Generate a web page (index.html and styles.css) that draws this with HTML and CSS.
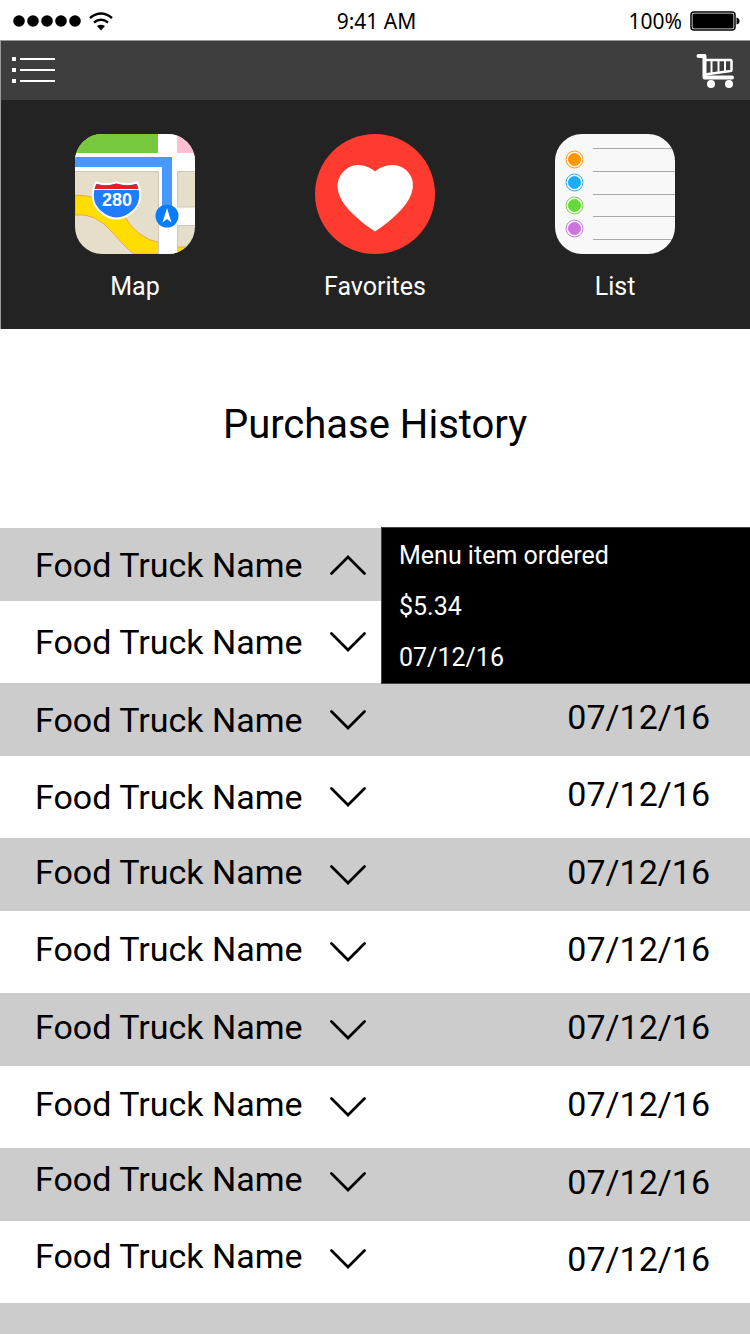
FILE: index.html
```html
<!DOCTYPE html>
<html lang="en">
<head>
<meta charset="utf-8">
<meta name="viewport" content="width=device-width, initial-scale=1">
<title>Purchase History</title>
<link rel="stylesheet" href="styles.css">
</head>
<body>
<svg width="0" height="0" class="sprite" aria-hidden="true">
  <symbol id="chevron" viewBox="0 0 36 20"><path d="M1.5 1.5 18 18 34.500 1.500" fill="none" stroke="#000" stroke-width="2.700" stroke-linecap="round"/></symbol>
</svg>
<div class="status">
  <div class="status-left">
    <svg width="68" height="12" viewBox="0 0 68 12" aria-label="Signal"><circle cx="6" cy="6" r="5.800"/><circle cx="20" cy="6" r="5.800"/><circle cx="34" cy="6" r="5.800"/><circle cx="48" cy="6" r="5.800"/><circle cx="62" cy="6" r="5.800"/></svg>
    <svg width="24" height="19" viewBox="0 0 24 19" aria-label="Wi-Fi"><path d="M1 6Q12-3 23 6M5 10.500Q12 5 19 10.500" fill="none" stroke="#000" stroke-width="2.500"/><path d="M8 14Q12 11.500 16 14L12 18.500Z"/></svg>
  </div>
  <div class="status-time">9:41 AM</div>
  <div class="status-right">
    <span>100%</span>
    <svg width="50" height="20" viewBox="0 0 50 20" aria-label="Battery"><rect x="1" y="1" width="44" height="18" rx="3" fill="#fff" stroke="#000" stroke-width="1.500"/><rect x="2.500" y="2.500" width="41" height="15" rx="1.500"/><path d="M46.500 6.500Q49.500 7 49.500 10T46.500 13.500Z"/></svg>
  </div>
</div>
<header class="navbar">
  <button class="icon-button" aria-label="Menu">
    <svg width="44" height="28" viewBox="0 0 44 28"><path d="M0 0h4v4H0zM0 11h4v4H0zM0 22h4v4H0zM8 1h35v2H8zM8 12h35v2H8zM8 23h35v2H8z" fill="#fff"/></svg>
  </button>
  <button class="icon-button" aria-label="Cart">
    <svg width="40" height="36" viewBox="0 0 40 36"><g fill="none" stroke="#fff"><path d="M2.500 3H8.500v21.500H36" stroke-width="4" stroke-linecap="round" stroke-linejoin="round"/><path d="M9 7h25.500q1 0 1 1v9q0 1-1 1L9 21.500" stroke-width="2.500" stroke-linejoin="round"/><path d="M15.500 7v13M22.500 7v12M29 7v11" stroke-width="2"/></g><circle cx="15" cy="31" r="4" fill="#fff"/><circle cx="33" cy="31" r="4" fill="#fff"/></svg>
  </button>
</header>
<nav class="shortcuts">
  <a class="shortcut" href="#map">
    <svg width="120" height="120" viewBox="0 0 120 120" aria-hidden="true">
      <defs><clipPath id="tile"><rect width="120" height="120" rx="27"/></clipPath></defs>
      <g clip-path="url(#tile)">
        <path d="M0 0h120v120H0z" fill="#e4decb"/>
        <path d="M0 61Q26 61 47 78Q61 105 86 109V120H59Q52 115 38 99Q20 78 0 81ZM98 113h22v7H98z" fill="#fd0" stroke="#f5a53d"/>
        <path d="M0 19h120v18H0zM83 0h19v120H83zM98 73h22v18H98z" fill="#fff"/>
        <path d="M0 37.500h83.500V120M102.500 120V91.500H120M120 73H102.500V37.500H120" fill="none" stroke="#cfc7b8"/>
        <path d="M0 0h83v19H0z" fill="#76c83c"/>
        <path d="M102 0h18v19h-18z" fill="#fbc1d0"/>
        <path d="M0 23h97v50H87V33H0z" fill="#4899ff"/>
        <path d="M21 48.500Q30 52 41.500 48.500Q53 52 62 48.500Q66 56 65 64C64 75 52 84.500 41.500 84.500C31 84.500 19 75 18 64Q17 56 21 48.500Z" fill="#1f7bff" stroke="#fff" stroke-width="2"/>
        <path d="M21.500 50Q31 53 41.500 49.500Q52 53 61.500 50L63.500 55H19.500Z" fill="#e11f29"/>
        <path d="M19 55.500h45" stroke="#fff"/>
        <text x="42" y="72" class="shield-text">280</text>
        <circle cx="92" cy="82" r="11.500" fill="#077cff"/>
        <path d="M92 74 96.500 88.500 92 85 87.500 88.500Z" fill="#fff"/>
      </g>
    </svg>
    <span>Map</span>
  </a>
  <a class="shortcut" href="#favorites">
    <svg width="120" height="120" viewBox="0 0 120 120" aria-hidden="true"><circle cx="60" cy="60" r="60" fill="#ff3b30"/><path d="M60 97.500Q47 89 38 80C18 61 20 45 30 36C40 27 54 32 60 37.500C66 32 81 27 91 36C101 45 102 61 82 80Q73 89 60 97.500Z" fill="#fff"/></svg>
    <span>Favorites</span>
  </a>
  <a class="shortcut" href="#list">
    <svg width="120" height="120" viewBox="0 0 120 120" aria-hidden="true">
      <g clip-path="url(#tile)"><path d="M0 0h120v120H0z" fill="#f8f8f8"/><path d="M38 14.500h82M38 37.500h82M38 60.500h82M38 82.500h82M38 105.500h82" stroke="#aaa"/></g>
      <g fill="#ff9500" stroke="#ff9500"><circle cx="19.500" cy="25.500" r="6"/><circle cx="19.500" cy="25.500" r="8.500" fill="none"/></g>
      <g fill="#1badf8" stroke="#1badf8"><circle cx="19.500" cy="48.500" r="6"/><circle cx="19.500" cy="48.500" r="8.500" fill="none"/></g>
      <g fill="#63da38" stroke="#63da38"><circle cx="19.500" cy="71.500" r="6"/><circle cx="19.500" cy="71.500" r="8.500" fill="none"/></g>
      <g fill="#cc73e1" stroke="#cc73e1"><circle cx="19.500" cy="94.500" r="6"/><circle cx="19.500" cy="94.500" r="8.500" fill="none"/></g>
    </svg>
    <span>List</span>
  </a>
</nav>
<main class="content">
  <h1 class="title">Purchase History</h1>
  <ul class="history">
    <li class="row">
      <button class="truck" aria-expanded="true" aria-controls="order"><span class="name">Food Truck Name</span><svg class="chevron" aria-hidden="true"><use href="#chevron"/></svg></button>
      <div class="order" id="order">
        <p>Menu item ordered</p>
        <p>$5.34</p>
        <p>07/12/16</p>
      </div>
    </li>
    <li class="row"><button class="truck" aria-expanded="false"><span class="name">Food Truck Name</span><svg class="chevron" aria-hidden="true"><use href="#chevron"/></svg></button></li>
    <li class="row"><button class="truck" aria-expanded="false"><span class="name">Food Truck Name</span><svg class="chevron" aria-hidden="true"><use href="#chevron"/></svg></button><time class="date">07/12/16</time></li>
    <li class="row"><button class="truck" aria-expanded="false"><span class="name">Food Truck Name</span><svg class="chevron" aria-hidden="true"><use href="#chevron"/></svg></button><time class="date">07/12/16</time></li>
    <li class="row"><button class="truck" aria-expanded="false"><span class="name">Food Truck Name</span><svg class="chevron" aria-hidden="true"><use href="#chevron"/></svg></button><time class="date">07/12/16</time></li>
    <li class="row"><button class="truck" aria-expanded="false"><span class="name">Food Truck Name</span><svg class="chevron" aria-hidden="true"><use href="#chevron"/></svg></button><time class="date">07/12/16</time></li>
    <li class="row"><button class="truck" aria-expanded="false"><span class="name">Food Truck Name</span><svg class="chevron" aria-hidden="true"><use href="#chevron"/></svg></button><time class="date">07/12/16</time></li>
    <li class="row"><button class="truck" aria-expanded="false"><span class="name">Food Truck Name</span><svg class="chevron" aria-hidden="true"><use href="#chevron"/></svg></button><time class="date">07/12/16</time></li>
    <li class="row row-end"><button class="truck" aria-expanded="false"><span class="name">Food Truck Name</span><svg class="chevron" aria-hidden="true"><use href="#chevron"/></svg></button><time class="date">07/12/16</time></li>
    <li class="row row-end"><button class="truck" aria-expanded="false"><span class="name">Food Truck Name</span><svg class="chevron" aria-hidden="true"><use href="#chevron"/></svg></button><time class="date">07/12/16</time></li>
  </ul>
  <div class="remainder"></div>
</main>
</body>
</html>
```

FILE: styles.css
```css
* { box-sizing: border-box; }

body {
  display: flex;
  flex-direction: column;
  min-height: 100vh;
  margin: 0;
  background: #fff;
  color: #000;
  font-family: Roboto, "Liberation Sans", sans-serif;
}

button {
  padding: 0;
  border: 0;
  background: none;
  color: inherit;
  font: inherit;
  cursor: pointer;
}

svg { display: block; flex: none; }

.sprite { position: absolute; }

.status {
  display: grid;
  grid-template-columns: 1fr auto 1fr;
  align-items: center;
  height: 40px;
  padding: 2px 10px 0 13px;
  font: 21px/24px "Noto Sans", "Open Sans", sans-serif;
}

.status-left, .status-right { display: flex; align-items: center; gap: 8px; }
.status-right { justify-content: flex-end; }

.navbar {
  display: flex;
  align-items: center;
  justify-content: space-between;
  height: 60px;
  padding: 0 14px 0 11px;
  border-top: 1px solid #999;
  border-left: 1px solid #999;
  background: #3e3e3e;
}

.shortcuts {
  display: grid;
  grid-template-columns: repeat(3, 1fr);
  padding: 34px 15px 27px 14px;
  border-left: 1px solid #999;
  background: #232323;
}

.shortcut {
  display: flex;
  flex-direction: column;
  align-items: center;
  gap: 18px;
  color: #fff;
  font-size: 25px;
  line-height: 30px;
  text-decoration: none;
}

.shield-text {
  fill: #fff;
  font: bold 18px "Liberation Sans", sans-serif;
  text-anchor: middle;
}

.content { display: flex; flex: 1; flex-direction: column; }

.title {
  margin: 0;
  padding: 72px 16px 79px;
  font-size: 40px;
  font-weight: 400;
  line-height: 48px;
  text-align: center;
}

.history { margin: 0; padding: 0; list-style: none; }

.row {
  position: relative;
  display: flex;
  align-items: center;
  justify-content: space-between;
  height: 82px;
  padding: 0 40px 0 35px;
  font-size: 34px;
  line-height: 40px;
}

.row:nth-child(odd) { height: 73px; background: #ccc; }

.truck { display: flex; align-items: center; gap: 27px; }
.row:nth-child(n + 5) .name { padding-bottom: 6px; }
.row-end .truck { padding-bottom: 6px; }
.chevron { width: 36px; height: 20px; }
.truck[aria-expanded="true"] .chevron { transform: rotate(180deg); }
.date { padding-bottom: 6px; }

.order {
  position: absolute;
  z-index: 1;
  top: -1px;
  right: 0;
  display: grid;
  gap: 21px;
  width: 49.2%;
  padding: 13px 17px 10px;
  border: 1px solid #444;
  border-right: 0;
  background: #000;
  color: #fff;
  font-size: 25px;
  line-height: 30px;
}

.order p { margin: 0; }

.remainder { flex: 1; min-height: 30px; background: #ccc; }
```
